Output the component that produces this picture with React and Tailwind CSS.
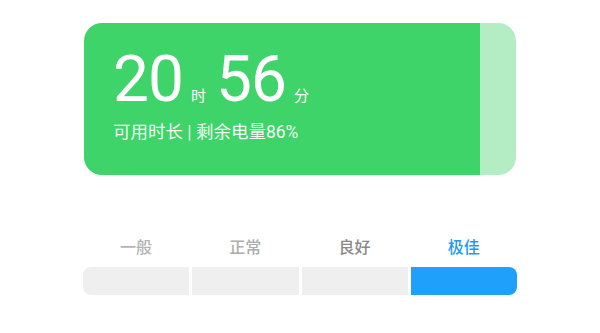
export default function App() {
  const levels = [
    { label: "一般", color: "text-[#b4b4b4]" },
    { label: "正常", color: "text-[#acacac]" },
    { label: "良好", color: "text-[#8a8a8a]" },
    { label: "极佳", color: "text-[#1b9bf3]" },
  ];

  return (
    <div
      className="w-[600px] h-[333px] bg-white overflow-hidden"
      style={{ fontFamily: '"Roboto", "Noto Sans CJK SC", sans-serif' }}
    >
      {/* Battery card */}
      <div className="mx-auto mt-[23px] w-[432px] h-[152px] rounded-[18px] overflow-hidden flex">
        <div className="flex-1 bg-[#3fd46a] pl-[29px] pt-[25px] text-white">
          <div className="flex items-baseline">
            <span className="text-[64px] leading-[64px] tracking-[-1px]">20</span>
            <span className="text-[15px] ml-[8px] mr-[10px]">时</span>
            <span className="text-[64px] leading-[64px] tracking-[-1px]">56</span>
            <span className="text-[15px] ml-[8px]">分</span>
          </div>
          <div className="mt-[10px] text-[17.5px] leading-[20px] text-white/95">
            可用时长 | 剩余电量86%
          </div>
        </div>
        <div className="w-[36px] bg-[#b4ecc4]"></div>
      </div>

      {/* Level bar */}
      <div className="mx-auto mt-[62px] w-[434px]">
        <div className="grid grid-cols-4 gap-[3px]">
          {levels.map((l) => (
            <div
              key={l.label}
              className={`text-center text-[16px] leading-[22px] font-medium ${l.color}`}
            >
              {l.label}
            </div>
          ))}
        </div>
        <div className="mt-[8px] grid grid-cols-4 gap-[3px] h-[28px]">
          <div className="bg-[#efefef] rounded-l-[8px]"></div>
          <div className="bg-[#efefef]"></div>
          <div className="bg-[#efefef]"></div>
          <div className="bg-[#1ea0fb] rounded-r-[8px]"></div>
        </div>
      </div>
    </div>
  );
}
